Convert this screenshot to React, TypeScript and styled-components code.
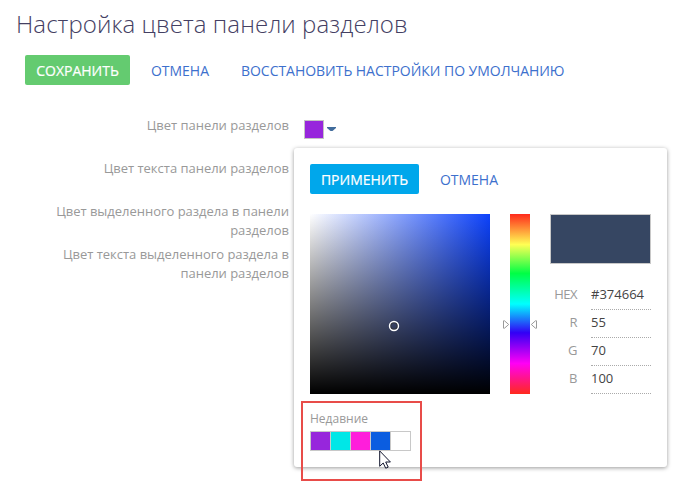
import React from "react";
import styled, { createGlobalStyle } from "styled-components";

const GlobalStyle = createGlobalStyle`
  * { box-sizing: border-box; }
  body {
    margin: 0;
    background: #fff;
    font-family: "Open Sans", "Noto Sans", sans-serif;
  }
`;

const Page = styled.main`
  width: 687px;
  height: 487px;
  overflow: hidden;
  padding: 7px 0 0 16px;
`;

const Title = styled.h1`
  margin: 0;
  height: 34px;
  line-height: 34px;
  font-size: 24px;
  font-weight: 300;
  letter-spacing: 0.08px;
  color: #444063;
  white-space: nowrap;
`;

const Toolbar = styled.div`
  display: flex;
  margin: 14px 0 0 9px;
`;

const Button = styled.button<{ $bg: string; $width: number }>`
  width: ${(p) => p.$width}px;
  height: 30px;
  padding: 1px 0 0;
  border: 0;
  border-radius: 2px;
  background: ${(p) => p.$bg};
  color: #fff;
  font: 400 14px/30px "Open Sans", sans-serif;
  -webkit-text-stroke: 0.2px #fff;
  text-transform: uppercase;
  white-space: nowrap;
`;

const LinkButton = styled.button<{ $gap: number }>`
  height: 30px;
  margin-left: ${(p) => p.$gap}px;
  padding: 1px 0 0;
  border: 0;
  background: none;
  color: #3d70cd;
  font: 400 14px/30px "Open Sans", sans-serif;
  letter-spacing: -0.03px;
  text-transform: uppercase;
  white-space: nowrap;
`;

const Form = styled.div`
  display: grid;
  grid-template-columns: 273px 1fr;
  grid-auto-rows: 43px;
  column-gap: 15px;
  margin-top: 31px;
`;

const Label = styled.label`
  justify-self: end;
  width: 240px;
  text-align: right;
  font-size: 13px;
  line-height: 19px;
  letter-spacing: -0.02px;
  color: #999;
`;

const ColorField = styled.div`
  position: relative;
  display: flex;
  align-items: flex-start;
  gap: 3px;
  padding-top: 4px;
`;

const Caret = styled.svg`
  margin-top: 7px;
`;

const CurrentColor = styled.div`
  width: 20px;
  height: 19px;
  border: 1px solid #c4c4c4;
  background: #9726dc;
`;

const Popup = styled.section`
  position: absolute;
  left: -10px;
  top: 32px;
  z-index: 1;
  width: 373px;
  height: 319px;
  padding: 16px 16px 0;
  border-radius: 3px;
  background: #fff;
  box-shadow: 0 1px 4px rgba(0, 0, 0, 0.4);
`;

const PopupActions = styled.div`
  display: flex;
`;

const PickerBody = styled.div`
  display: flex;
  gap: 20px;
  height: 180px;
  margin-top: 20px;
`;

const ShadeArea = styled.div`
  position: relative;
  width: 180px;
  height: 180px;
  background:
    linear-gradient(to bottom, rgba(0, 0, 0, 0), #000),
    linear-gradient(to right, #fff, #0d42fb);
`;

const ShadeMarker = styled.svg`
  position: absolute;
  left: 78px;
  top: 106px;
`;

const HueBar = styled.div`
  position: relative;
  width: 20px;
  height: 180px;
  background: linear-gradient(
    to bottom,
    #ff2a1c 0%, #ffff54 17%, #00ff45 33%, #00ffff 50%,
    #3200f5 66%, #ff00f5 83%, #ff2a1c 100%
  );
`;

const HueMarker = styled.svg`
  position: absolute;
  left: -7px;
  top: 106px;
`;

const Details = styled.div`
  width: 101px;
`;

const Preview = styled.div`
  height: 50px;
  margin-bottom: 18px;
  border: 1px solid #c8c8c8;
  background: #364662;
`;

const Channel = styled.div`
  display: grid;
  grid-template-columns: 27px 60px;
  column-gap: 14px;
  height: 28px;
  font-size: 13px;
  line-height: 24px;
`;

const ChannelName = styled.span`
  text-align: right;
  letter-spacing: -0.5px;
  color: #999;
`;

const ChannelValue = styled.span`
  border-bottom: 1px dotted #aaa;
  color: #444;
`;

const Recent = styled.div`
  margin-top: 15px;
`;

const RecentTitle = styled.div`
  height: 22px;
  font-size: 12px;
  line-height: 20px;
  color: #999;
`;

const SwatchRow = styled.div`
  display: flex;
`;

const Swatch = styled.div<{ $color: string }>`
  width: 21px;
  height: 20px;
  margin-right: -1px;
  border: 1px solid #c8c8c8;
  background: ${(p) => p.$color};
`;

const Highlight = styled.div`
  position: absolute;
  left: 7px;
  top: 253px;
  width: 121px;
  height: 80px;
  border: 2px solid #e84c49;
`;

const Cursor = styled.svg`
  position: absolute;
  left: 85px;
  top: 302px;
`;

const channels = [
  ["HEX", "#374664"],
  ["R", "55"],
  ["G", "70"],
  ["B", "100"],
];

const recentColors = ["#9726dc", "#00e7e7", "#ff1edb", "#0b5de0", "#fff"];

function ColorPopup() {
  return (
    <Popup>
      <PopupActions>
        <Button $bg="#00a7eb" $width={109}>Применить</Button>
        <LinkButton $gap={21}>Отмена</LinkButton>
      </PopupActions>
      <PickerBody>
        <ShadeArea>
          <ShadeMarker width="12" height="12" viewBox="0 0 12 12" fill="none">
            <circle cx="6" cy="6" r="3.4" stroke="#333" strokeWidth="1" />
            <circle cx="6" cy="6" r="4.5" stroke="#fff" strokeWidth="1.4" />
          </ShadeMarker>
        </ShadeArea>
        <HueBar>
          <HueMarker width="34" height="9" viewBox="0 0 34 9" fill="#fff" stroke="#999">
            <path d="M.5 .8v7.4h1L5.7 4.5 1.5.8z" />
            <path d="M33.5 .8v7.4h-1L28.3 4.5 32.5.8z" />
          </HueMarker>
        </HueBar>
        <Details>
          <Preview />
          {channels.map(([name, value]) => (
            <Channel key={name}>
              <ChannelName>{name}</ChannelName>
              <ChannelValue>{value}</ChannelValue>
            </Channel>
          ))}
        </Details>
      </PickerBody>
      <Recent>
        <RecentTitle>Недавние</RecentTitle>
        <SwatchRow>
          {recentColors.map((color) => (
            <Swatch key={color} $color={color} />
          ))}
        </SwatchRow>
      </Recent>
      <Highlight />
      <Cursor width="13" height="20" viewBox="0 0 13 20">
        <path
          d="M.7 .9V16.3L4.2 13l2.5 5.2 2.5-1.1-2.5-5.1h4.7z"
          fill="#fff"
          stroke="#10142c"
          strokeWidth="1"
        />
      </Cursor>
    </Popup>
  );
}

export default function App() {
  return (
    <Page>
      <GlobalStyle />
      <Title>Настройка цвета панели разделов</Title>
      <Toolbar>
        <Button $bg="#64cb70" $width={105}>Сохранить</Button>
        <LinkButton $gap={21}>Отмена</LinkButton>
        <LinkButton $gap={32}>Восстановить настройки по умолчанию</LinkButton>
      </Toolbar>
      <Form>
        <Label>Цвет панели разделов</Label>
        <ColorField>
          <CurrentColor />
          <Caret width="9" height="4" viewBox="0 0 9 4">
            <path d="M0 0h9v1L5.5 4h-2L0 1z" fill="#416c9c" />
          </Caret>
          <ColorPopup />
        </ColorField>
        <Label>Цвет текста панели разделов</Label>
        <span />
        <Label>Цвет выделенного раздела в панели разделов</Label>
        <span />
        <Label>Цвет текста выделенного раздела в панели разделов</Label>
        <span />
      </Form>
    </Page>
  );
}
